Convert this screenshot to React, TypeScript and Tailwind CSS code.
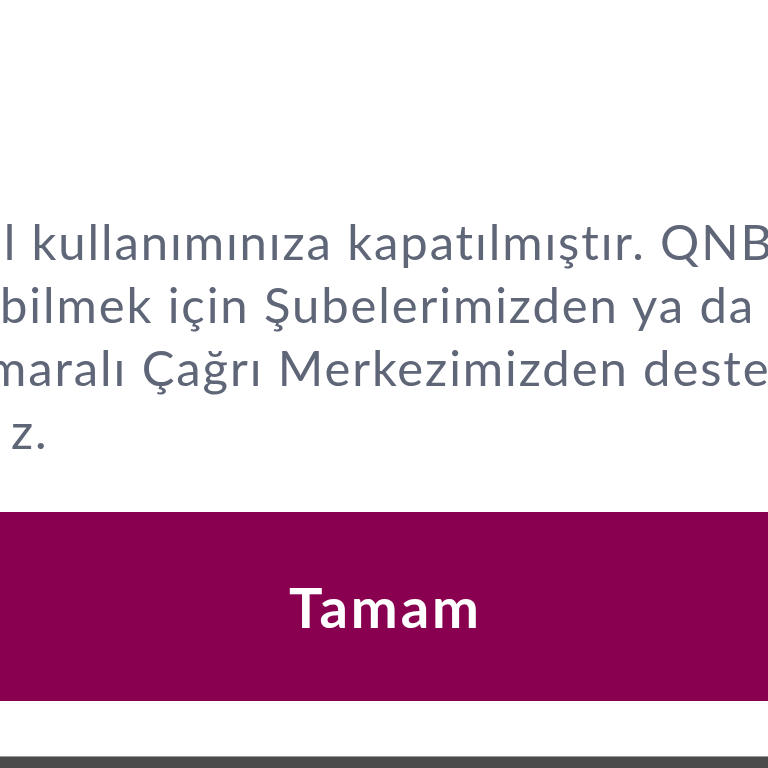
import React from 'react';

const lines = [
  { text: 'il kullanımınıza kapatılmıştır. QNB', offset: 'ml-[-10px]' },
  { text: 'bilmek için Şubelerimizden ya da', offset: 'ml-[0px]' },
  { text: 'maralı Çağrı Merkezimizden destek', offset: 'ml-[-14px]' },
  { text: 'z.', offset: 'ml-[11px]' },
];

export default function App() {
  return (
    <div className="flex h-[768px] w-[768px] flex-col overflow-hidden bg-white font-['Lato',sans-serif] [font-variant-ligatures:none]">
      {/* message text, cropped on both sides */}
      <div className="mt-[210px] flex flex-col overflow-hidden text-[49px] leading-[63px] tracking-[1.9px] text-[#5f6678]">
        {lines.map((line) => (
          <div key={line.text} className={`whitespace-nowrap ${line.offset}`}>
            {line.text}
          </div>
        ))}
      </div>

      {/* confirm button */}
      <button className="mt-[50px] flex h-[189px] w-full items-center justify-center bg-[#88004f] pl-[3px] text-[56px] font-bold tracking-[3px] text-white">
        Tamam
      </button>

      <div className="flex-1 bg-white" />
      <div className="h-[12px] border-t border-[#9a9a9a] bg-[#4b4b4b]" />
    </div>
  );
}
